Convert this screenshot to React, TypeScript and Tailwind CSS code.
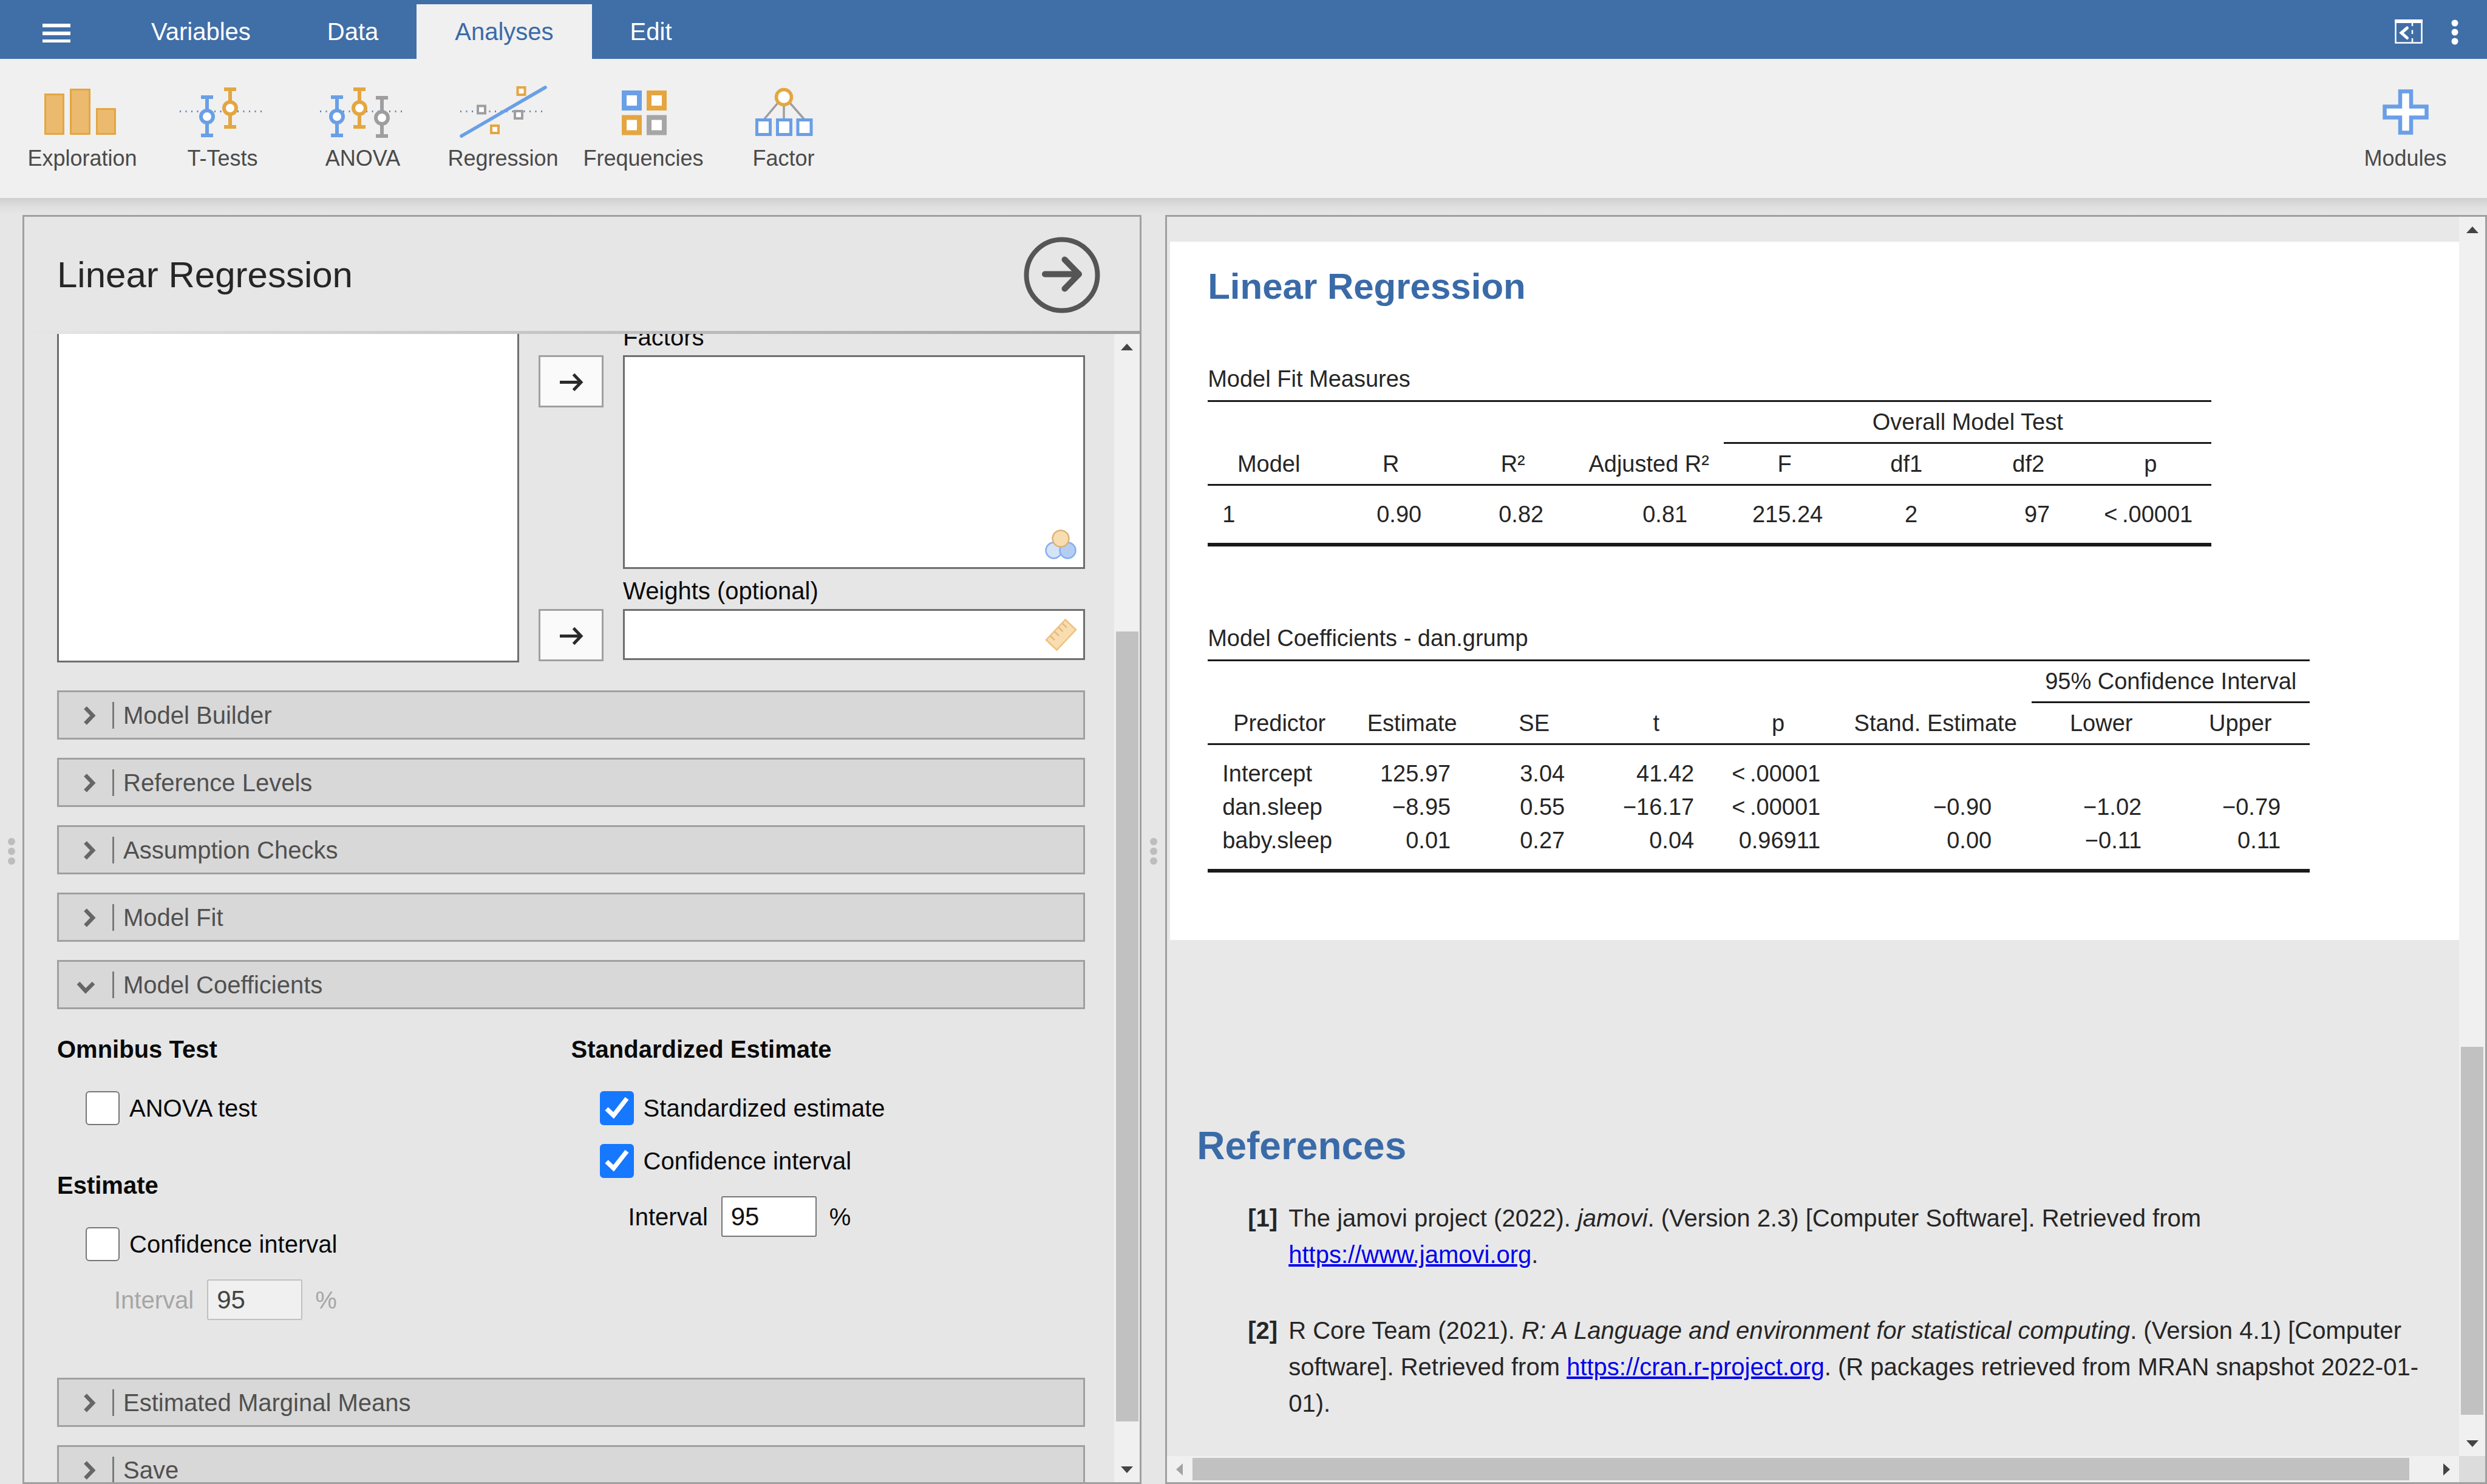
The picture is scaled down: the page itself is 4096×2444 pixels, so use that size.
import React from "react";

const BLUE = "#6a9fe6";
const ORANGE = "#e4a641";
const GREY = "#9e9e9e";

/* ---------- ribbon icons (144 x 96 canvas each) ---------- */

function RibbonSvg({ children }: { children: React.ReactNode }) {
  return (
    <svg width="144" height="96" viewBox="0 0 144 96" fill="none" aria-hidden="true" className="shrink-0">
      {children}
    </svg>
  );
}

function Dotted() {
  return <line x1="1" y1="47.500" x2="141" y2="47.500" stroke="#5a86bd" strokeWidth="3" strokeDasharray="2 7.500" />;
}

function ErrorBar({ x, top, bottom, cy, color }: { x: number; top: number; bottom: number; cy: number; color: string }) {
  return (
    <g stroke={color} strokeWidth="6">
      <line x1={x} y1={top} x2={x} y2={bottom} />
      <line x1={x - 10} y1={top + 3} x2={x + 10} y2={top + 3} />
      <line x1={x - 10} y1={bottom - 3} x2={x + 10} y2={bottom - 3} />
      <circle cx={x} cy={cy} r="10" fill="#fff" />
    </g>
  );
}

function ExplorationIcon() {
  return (
    <RibbonSvg>
      <g fill="#ebba6e" stroke={ORANGE} strokeWidth="3">
        <rect x="10.500" y="19.500" width="30" height="65" />
        <rect x="52.500" y="11.500" width="31" height="73" />
        <rect x="95.500" y="43.500" width="30" height="41" />
      </g>
    </RibbonSvg>
  );
}

function TTestsIcon() {
  return (
    <RibbonSvg>
      <Dotted />
      <ErrorBar x={46} top={21} bottom={90} cy={56} color={BLUE} />
      <ErrorBar x={84} top={8} bottom={76} cy={42} color={ORANGE} />
    </RibbonSvg>
  );
}

function AnovaIcon() {
  return (
    <RibbonSvg>
      <Dotted />
      <ErrorBar x={29} top={21} bottom={90} cy={56} color={BLUE} />
      <ErrorBar x={66} top={8} bottom={76} cy={42} color={ORANGE} />
      <ErrorBar x={103} top={22} bottom={91} cy={58} color={GREY} />
    </RibbonSvg>
  );
}

function RegressionIcon() {
  return (
    <RibbonSvg>
      <Dotted />
      <line x1="3" y1="88" x2="141" y2="8" stroke={BLUE} strokeWidth="5.500" strokeLinecap="round" />
      <g fill="#fff" strokeWidth="4">
        <rect x="95.500" y="8" width="12" height="12" stroke={ORANGE} />
        <rect x="30" y="38.500" width="12" height="12" stroke={GREY} />
        <rect x="91" y="47" width="12" height="12" stroke={GREY} />
        <rect x="52" y="71" width="12" height="12" stroke={ORANGE} />
      </g>
    </RibbonSvg>
  );
}

function FrequenciesIcon() {
  return (
    <RibbonSvg>
      <g fill="#fff" strokeWidth="8">
        <rect x="40" y="17" width="25" height="25" stroke={BLUE} />
        <rect x="81" y="17" width="25" height="25" stroke={ORANGE} />
        <rect x="40" y="57.500" width="25" height="25" stroke={ORANGE} />
        <rect x="81" y="57.500" width="25" height="25" stroke="#a6a6a6" />
      </g>
    </RibbonSvg>
  );
}

function FactorIcon() {
  return (
    <RibbonSvg>
      <g stroke={GREY} strokeWidth="3.500">
        <line x1="65" y1="30" x2="39" y2="61" />
        <line x1="72" y1="30" x2="72" y2="61" />
        <line x1="79" y1="30" x2="106" y2="61" />
      </g>
      <circle cx="72" cy="24" r="12.500" fill="#fff" stroke={ORANGE} strokeWidth="5.500" />
      <g fill="#fff" stroke={BLUE} strokeWidth="5">
        <rect x="27.500" y="61.500" width="22" height="24" />
        <rect x="61.500" y="61.500" width="22" height="24" />
        <rect x="95" y="61.500" width="22" height="24" />
      </g>
    </RibbonSvg>
  );
}

function ModulesIcon() {
  return (
    <RibbonSvg>
      <path
        d="M63 14.500H81V39.500H106.500V57.500H81V82.500H63V57.500H37.500V39.500H63Z"
        fill="#fff"
        stroke={BLUE}
        strokeWidth="6.500"
      />
    </RibbonSvg>
  );
}

function RibbonButton({ label, children }: { label: string; children: React.ReactNode }) {
  return (
    <button type="button" className="flex w-[231px] shrink-0 flex-col items-center pt-[39px] text-[36px] leading-[44px] text-[#4a4a4a]">
      {children}
      <span className="mt-[7px]">{label}</span>
    </button>
  );
}

/* ---------- scroll bars ---------- */

function Arrow({ dir, muted }: { dir: "up" | "down" | "left" | "right"; muted?: boolean }) {
  const d = {
    up: "M11 27L21 16L31 27Z",
    down: "M11 16L21 27L31 16Z",
    left: "M26 11L15 21L26 31Z",
    right: "M16 11L27 21L16 31Z",
  }[dir];
  return (
    <svg width="42" height="42" viewBox="0 0 42 42" className="shrink-0" aria-hidden="true">
      <path d={d} fill={muted ? "#a3a3a3" : "#444"} />
    </svg>
  );
}

/* ---------- options panel ---------- */

function MoveButton({ label }: { label: string }) {
  return (
    <button
      type="button"
      aria-label={label}
      className="flex h-[86px] w-[107px] items-center justify-center border-3 border-[#a0a0a0] bg-[#fafafa]"
    >
      <svg width="44" height="36" viewBox="0 0 44 36" fill="none" stroke="#2a2a2a" strokeWidth="5" aria-hidden="true">
        <path d="M3 19.500H39" />
        <path d="M25.500 6.500L38 19.500L25.500 32.500" />
      </svg>
    </button>
  );
}

function SectionBar({ title, open }: { title: string; open?: boolean }) {
  return (
    <button
      type="button"
      aria-expanded={!!open}
      className="flex h-[81px] w-full shrink-0 items-center border-3 border-[#a0a0a0] bg-[#d8d8d8] pl-[29px] text-left text-[40px] leading-[50px] text-[#505050]"
    >
      <svg width="42" height="36" viewBox="0 0 42 36" fill="none" stroke="#666" strokeWidth="6.500" aria-hidden="true">
        <path d={open ? "M3 15L15 28L28 15" : "M14.500 5.500L27 18.500L14.500 31.500"} />
      </svg>
      <span className="ml-[17px] h-[44px] w-[3px] bg-[#7a7a7a]" />
      <span className="ml-[15px]">{title}</span>
    </button>
  );
}

function CheckRow({ id, label, checked }: { id: string; label: string; checked?: boolean }) {
  return (
    <div className="ml-[47px] flex h-[56px] items-center gap-[16px]">
      <span className="grid size-[56px]">
        <input
          id={id}
          type="checkbox"
          defaultChecked={checked}
          className="peer col-start-1 row-start-1 size-[56px] appearance-none rounded-[6px] border-2 border-[#767676] bg-white checked:border-[#1677ff] checked:bg-[#1677ff]"
        />
        <svg
          viewBox="0 0 56 56"
          className="pointer-events-none invisible col-start-1 row-start-1 size-[56px] peer-checked:visible"
          fill="none"
          stroke="#fff"
          strokeWidth="7.500"
          aria-hidden="true"
        >
          <path d="M11 29L22.500 40L44.500 12" />
        </svg>
      </span>
      <label htmlFor={id}>{label}</label>
    </div>
  );
}

function IntervalRow({ id, disabled }: { id: string; disabled?: boolean }) {
  return (
    <div className={disabled ? "ml-[94px] mt-[30px] flex h-[67px] items-center text-[#a6a6a6]" : "ml-[94px] mt-[30px] flex h-[67px] items-center"}>
      <label htmlFor={id}>Interval</label>
      <input
        id={id}
        type="text"
        defaultValue="95"
        disabled={disabled}
        className="ml-[22px] mr-[21px] h-[67px] w-[157px] rounded-[3px] border-2 border-[#767676] bg-white px-[14px] text-[42px] text-[#111] disabled:border-[#c0c0c0] disabled:bg-[#f0f0f0] disabled:text-[#444]"
      />
      <span>%</span>
    </div>
  );
}

function NominalIcon() {
  return (
    <svg width="54" height="50" viewBox="0 0 54 50" strokeWidth="2.500" aria-hidden="true">
      <circle cx="15.500" cy="34.500" r="13" fill="#d5e3f8" stroke="#85aeee" />
      <circle cx="38.500" cy="34.500" r="13" fill="#b4cdf4" stroke="#85aeee" />
      <circle cx="27" cy="15" r="13.500" fill="#f8ddb0" stroke="#dbb47c" />
    </svg>
  );
}

function RulerIcon() {
  return (
    <svg width="54" height="56" viewBox="0 0 54 56" strokeWidth="2.500" aria-hidden="true">
      <path d="M34.500 3.500L52 20L20.500 53.500L3 37Z" fill="#f8ddb0" stroke="#efc180" />
      <path d="M10 30.500L17 37M17 23.500L24 30M23.500 16.500L30.500 23M30 10L37 16.500" fill="none" stroke="#e3ba7e" />
    </svg>
  );
}

function OptionsPanel() {
  return (
    <section className="flex w-[45%] shrink-0 flex-col border-3 border-[#a0a0a0] bg-[#e6e6e6]">
      <header className="flex h-[188px] shrink-0 items-center justify-between pl-[54px] pr-[65px] pt-[4px]">
        <h1 className="text-[60px] leading-[70px] text-[#262626]">Linear Regression</h1>
        <button type="button" aria-label="Close options" className="rounded-full">
          <svg width="126" height="126" viewBox="0 0 126 126" fill="none" stroke="#555" aria-hidden="true">
            <circle cx="63" cy="63" r="58.500" strokeWidth="8" />
            <path d="M35 61.500H90M67.500 37.500L91 61.500L67.500 85.500" strokeWidth="10" strokeLinecap="round" strokeLinejoin="round" />
          </svg>
        </button>
      </header>
      <div className="h-[5px] shrink-0 bg-linear-to-r from-[#e6e6e6] to-[#a0a0a0]" />
      <div className="flex min-h-0 flex-1">
        <div className="min-w-0 flex-1 overflow-hidden pl-[54px] pr-[48px] text-[40px] leading-[50px] text-[#0a0a0a]">
          <div className="-mt-[20px] grid grid-cols-[1fr_107px_1fr] gap-[32px]">
            <div className="border-3 border-[#6e6e6e] bg-white" role="listbox" aria-label="Variables" />
            <div className="flex flex-col gap-[332px] pt-[55px]">
              <MoveButton label="Move to Factors" />
              <MoveButton label="Move to Weights" />
            </div>
            <div className="flex flex-col pb-[4px]">
              <div className="mb-[5px]">Factors</div>
              <div className="flex h-[352px] items-end justify-end border-3 border-[#6e6e6e] bg-white pb-[12px] pr-[10px]">
                <NominalIcon />
              </div>
              <div className="mb-[5px] mt-[11px]">Weights (optional)</div>
              <div className="flex h-[84px] items-center justify-end border-3 border-[#6e6e6e] bg-white pr-[10px]">
                <RulerIcon />
              </div>
            </div>
          </div>

          <div className="mt-[46px] flex flex-col gap-[30px]">
            <SectionBar title="Model Builder" />
            <SectionBar title="Reference Levels" />
            <SectionBar title="Assumption Checks" />
            <SectionBar title="Model Fit" />
            <SectionBar title="Model Coefficients" open />
          </div>

          <div className="grid grid-cols-2 pb-[95px] pt-[41px]">
            <div>
              <h2 className="mb-[44px] font-bold">Omnibus Test</h2>
              <CheckRow id="anova-test" label="ANOVA test" />
              <h2 className="mb-[44px] mt-[74px] font-bold">Estimate</h2>
              <CheckRow id="est-ci" label="Confidence interval" />
              <IntervalRow id="est-width" disabled />
            </div>
            <div>
              <h2 className="mb-[44px] font-bold">Standardized Estimate</h2>
              <CheckRow id="std-est" label="Standardized estimate" checked />
              <div className="mt-[31px]">
                <CheckRow id="std-ci" label="Confidence interval" checked />
              </div>
              <IntervalRow id="std-width" />
            </div>
          </div>

          <div className="flex flex-col gap-[30px]">
            <SectionBar title="Estimated Marginal Means" />
            <SectionBar title="Save" />
          </div>
        </div>
        <div className="flex w-[42px] shrink-0 flex-col items-center bg-[#f0f0f0]">
          <Arrow dir="up" />
          <div className="grow-[448]" />
          <div className="w-[37px] grow-[1301] bg-[#c1c1c1]" />
          <div className="grow-[58]" />
          <Arrow dir="down" />
        </div>
      </div>
    </section>
  );
}

/* ---------- results panel ---------- */

const TOP = "h-[72px] border-t-3 border-[#1a1a1a] p-0 font-normal";
const GROUP = "h-[72px] border-y-3 border-[#1a1a1a] p-0 font-normal";
const HEAD = "h-[69px] border-b-3 border-[#1a1a1a] p-0 font-normal whitespace-nowrap";

const FIT_PAD = ["pl-[24px] text-left", "pr-[50px]", "pr-[50px]", "pr-[60px]", "pr-[37px]", "pr-[82px]", "pr-[65px]", "pr-[31px]"];
const COEF_PAD = ["pl-[24px] text-left", "pr-[37px]", "pr-[50px]", "pr-[38px]", "pr-[31px]", "pr-[66px]", "pr-[48px]", "pr-[48px]"];

function Rows({ rows, pads }: { rows: string[][]; pads: string[] }) {
  return (
    <tbody className="text-right leading-[55px]">
      {rows.map((row, r) => (
        <tr key={r}>
          {row.map((cell, c) => (
            <td
              key={c}
              className={[
                "whitespace-nowrap",
                pads[c],
                r === 0 ? "pt-[20px]" : "",
                r === rows.length - 1 ? "border-b-6 border-[#1a1a1a] pb-[19px]" : "",
              ].join(" ")}
            >
              {cell}
            </td>
          ))}
        </tr>
      ))}
    </tbody>
  );
}

function FitTable() {
  return (
    <table className="mt-[92px] w-[1653px] table-fixed border-separate border-spacing-0 text-[38px]">
      <caption className="pb-[10px] text-left leading-[50px]">Model Fit Measures</caption>
      <colgroup>
        <col className="w-[201px]" />
        <col className="w-[201px]" />
        <col className="w-[201px]" />
        <col className="w-[247px]" />
        <col className="w-[200px]" />
        <col className="w-[201px]" />
        <col className="w-[201px]" />
        <col className="w-[201px]" />
      </colgroup>
      <thead>
        <tr>
          <td colSpan={4} className={TOP} />
          <th colSpan={4} className={GROUP}>Overall Model Test</th>
        </tr>
        <tr>
          {["Model", "R", "R²", "Adjusted R²", "F", "df1", "df2", "p"].map((h) => (
            <th key={h} className={HEAD}>{h}</th>
          ))}
        </tr>
      </thead>
      <Rows pads={FIT_PAD} rows={[["1", "0.90", "0.82", "0.81", "215.24", "2", "97", "<\u2009.00001"]]} />
    </table>
  );
}

function CoefTable() {
  return (
    <table className="mt-[126px] w-[1815px] table-fixed border-separate border-spacing-0 text-[38px]">
      <caption className="pb-[10px] text-left leading-[50px]">Model Coefficients - dan.grump</caption>
      <colgroup>
        <col className="w-[236px]" />
        <col className="w-[201px]" />
        <col className="w-[201px]" />
        <col className="w-[201px]" />
        <col className="w-[201px]" />
        <col className="w-[317px]" />
        <col className="w-[229px]" />
        <col className="w-[229px]" />
      </colgroup>
      <thead>
        <tr>
          <td colSpan={6} className={TOP} />
          <th colSpan={2} className={GROUP}>95% Confidence Interval</th>
        </tr>
        <tr>
          {["Predictor", "Estimate", "SE", "t", "p", "Stand. Estimate", "Lower", "Upper"].map((h) => (
            <th key={h} className={HEAD}>{h}</th>
          ))}
        </tr>
      </thead>
      <Rows
        pads={COEF_PAD}
        rows={[
          ["Intercept", "125.97", "3.04", "41.42", "<\u2009.00001", "", "", ""],
          ["dan.sleep", "−8.95", "0.55", "−16.17", "<\u2009.00001", "−0.90", "−1.02", "−0.79"],
          ["baby.sleep", "0.01", "0.27", "0.04", "0.96911", "0.00", "−0.11", "0.11"],
        ]}
      />
    </table>
  );
}

function ResultsPanel() {
  return (
    <section className="flex min-w-0 flex-1 border-3 border-[#a0a0a0] bg-[#e8e8e8] text-[#262626]">
      <div className="flex min-w-0 flex-1 flex-col">
        <div className="min-h-0 flex-1 overflow-hidden pt-[41px]">
          <article className="ml-[5px] bg-white pb-[111px] pl-[62px] pt-[39px]">
            <h2 className="text-[60px] font-bold leading-[70px] text-[#3a6ba8]">Linear Regression</h2>
            <FitTable />
            <CoefTable />
          </article>
          <div className="mt-[304px] pl-[49px] pr-[40px] text-[40px] leading-[60px]">
            <h2 className="text-[64px] font-bold leading-[70px] text-[#3a6ba8]">References</h2>
            <ol className="mt-[54px] flex flex-col gap-[65px] pl-[84px]">
              <li className="flex">
                <span className="w-[67px] shrink-0 font-bold">[1]</span>
                <p>
                  The jamovi project (2022). <em>jamovi</em>. (Version 2.3) [Computer Software]. Retrieved from{" "}
                  <a href="https://www.jamovi.org" className="whitespace-nowrap text-[#0000ee] underline">https://www.jamovi.org</a>.
                </p>
              </li>
              <li className="flex">
                <span className="w-[67px] shrink-0 font-bold">[2]</span>
                <p>
                  R Core Team (2021). <em>R: A Language and environment for statistical computing</em>. (Version 4.1) [Computer
                  software]. Retrieved from{" "}
                  <a href="https://cran.r-project.org" className="whitespace-nowrap text-[#0000ee] underline">https://cran.r-project.org</a>.
                  (R packages retrieved from MRAN snapshot 2022-01-01).
                </p>
              </li>
            </ol>
          </div>
        </div>
        <div className="flex h-[43px] shrink-0 items-center bg-[#f0f0f0]">
          <Arrow dir="left" muted />
          <div className="h-[37px] grow-[2004] bg-[#c1c1c1]" />
          <div className="grow-[40]" />
          <Arrow dir="right" />
        </div>
      </div>
      <div className="flex w-[43px] shrink-0 flex-col bg-[#dcdcdc] pb-[43px]">
        <div className="flex flex-1 flex-col items-center bg-[#f0f0f0]">
          <Arrow dir="up" />
          <div className="grow-[1324]" />
          <div className="w-[37px] grow-[605] bg-[#c1c1c1]" />
          <div className="grow-[26]" />
          <Arrow dir="down" />
        </div>
      </div>
    </section>
  );
}

function Splitter() {
  return (
    <div className="flex flex-col items-center justify-center gap-[4px] pt-[6px]">
      <span className="size-[12px] rounded-full bg-[#bdbdbd]" />
      <span className="size-[12px] rounded-full bg-[#bdbdbd]" />
      <span className="size-[12px] rounded-full bg-[#bdbdbd]" />
    </div>
  );
}

/* ---------- application ---------- */

function MenuBar() {
  const tab = "px-[63px] h-full";
  return (
    <nav className="flex h-[97px] shrink-0 items-center bg-[#406ea7] pt-[7px] text-[40px] leading-[50px] text-white">
      <button type="button" aria-label="Menu" className="flex w-[186px] justify-center">
        <svg width="46" height="36" viewBox="0 0 46 36" fill="#fff" aria-hidden="true">
          <path d="M0 5H46V11H0ZM0 18H46V24H0ZM0 31H46V36H0Z" />
        </svg>
      </button>
      <button type="button" className={tab}>Variables</button>
      <button type="button" className={tab}>Data</button>
      <button type="button" className="h-full bg-[#f0f0f0] px-[63px] text-[#3a6ba8]">Analyses</button>
      <button type="button" className={tab}>Edit</button>
      <div className="ml-auto flex items-center gap-[33px] pr-[33px]">
        <button type="button" aria-label="Toggle results">
          <svg width="46" height="40" viewBox="0 0 46 40" fill="none" stroke="#fff" aria-hidden="true">
            <rect x="1.500" y="1.500" width="43" height="37" strokeWidth="2.500" />
            <path d="M0 3H46" strokeWidth="6" />
            <path d="M29 6V11M29 17.500V24M29 31V38" strokeWidth="2.500" />
            <path d="M20.500 14L11 22L20.500 30.500" strokeWidth="5" strokeLinecap="round" />
          </svg>
        </button>
        <button type="button" aria-label="More">
          <svg width="40" height="48" viewBox="0 0 40 48" fill="#fff" aria-hidden="true">
            <circle cx="20" cy="10" r="5.500" />
            <circle cx="20" cy="25" r="5.500" />
            <circle cx="20" cy="40" r="5.500" />
          </svg>
        </button>
      </div>
    </nav>
  );
}

export default function App() {
  return (
    <div className="flex h-screen flex-col overflow-hidden bg-[#e6e6e6] font-['Liberation_Sans',Arial,sans-serif]">
      <MenuBar />
      <div className="flex h-[229px] shrink-0 bg-[#f0f0f0] pl-[20px] pr-[19px]">
        <RibbonButton label="Exploration"><ExplorationIcon /></RibbonButton>
        <RibbonButton label="T-Tests"><TTestsIcon /></RibbonButton>
        <RibbonButton label="ANOVA"><AnovaIcon /></RibbonButton>
        <RibbonButton label="Regression"><RegressionIcon /></RibbonButton>
        <RibbonButton label="Frequencies"><FrequenciesIcon /></RibbonButton>
        <RibbonButton label="Factor"><FactorIcon /></RibbonButton>
        <div className="flex-1" />
        <RibbonButton label="Modules"><ModulesIcon /></RibbonButton>
      </div>
      <div className="h-[28px] shrink-0 bg-linear-to-b from-[#cfcfcf] via-[#dfdfdf] to-[#e6e6e6]" />
      <main className="flex min-h-0 flex-1">
        <div className="flex w-[37px] shrink-0 justify-center"><Splitter /></div>
        <OptionsPanel />
        <div className="flex w-[39px] shrink-0 justify-center"><Splitter /></div>
        <ResultsPanel />
      </main>
    </div>
  );
}
